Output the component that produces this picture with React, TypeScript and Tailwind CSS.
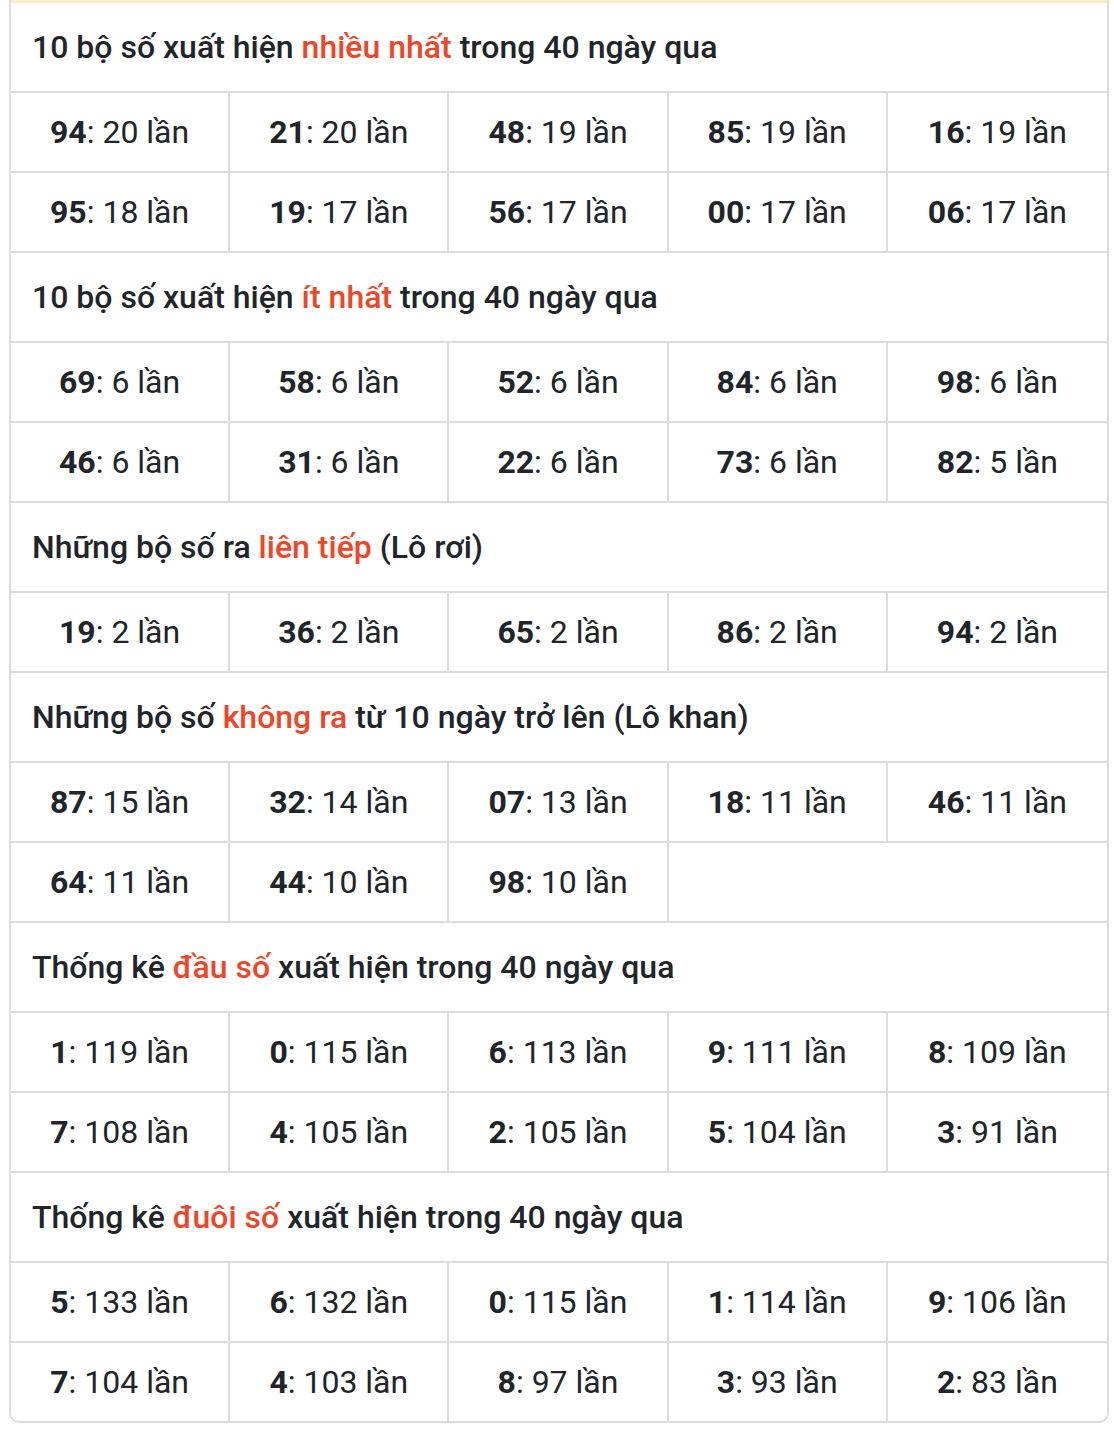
const sections: { title: [string, string, string]; rows: [string, string][][] }[] = [
  {
    title: ["10 bộ số xuất hiện ", "nhiều nhất", " trong 40 ngày qua"],
    rows: [
      [["94", "20"], ["21", "20"], ["48", "19"], ["85", "19"], ["16", "19"]],
      [["95", "18"], ["19", "17"], ["56", "17"], ["00", "17"], ["06", "17"]],
    ],
  },
  {
    title: ["10 bộ số xuất hiện ", "ít nhất", " trong 40 ngày qua"],
    rows: [
      [["69", "6"], ["58", "6"], ["52", "6"], ["84", "6"], ["98", "6"]],
      [["46", "6"], ["31", "6"], ["22", "6"], ["73", "6"], ["82", "5"]],
    ],
  },
  {
    title: ["Những bộ số ra ", "liên tiếp", " (Lô rơi)"],
    rows: [[["19", "2"], ["36", "2"], ["65", "2"], ["86", "2"], ["94", "2"]]],
  },
  {
    title: ["Những bộ số ", "không ra", " từ 10 ngày trở lên (Lô khan)"],
    rows: [
      [["87", "15"], ["32", "14"], ["07", "13"], ["18", "11"], ["46", "11"]],
      [["64", "11"], ["44", "10"], ["98", "10"]],
    ],
  },
  {
    title: ["Thống kê ", "đầu số", " xuất hiện trong 40 ngày qua"],
    rows: [
      [["1", "119"], ["0", "115"], ["6", "113"], ["9", "111"], ["8", "109"]],
      [["7", "108"], ["4", "105"], ["2", "105"], ["5", "104"], ["3", "91"]],
    ],
  },
  {
    title: ["Thống kê ", "đuôi số", " xuất hiện trong 40 ngày qua"],
    rows: [
      [["5", "133"], ["6", "132"], ["0", "115"], ["1", "114"], ["9", "106"]],
      [["7", "104"], ["4", "103"], ["8", "97"], ["3", "93"], ["2", "83"]],
    ],
  },
];

export default function App() {
  return (
    <div className="min-h-screen bg-white pl-[9px] pr-[5px] pb-[6px] font-['Roboto',sans-serif] text-[#212529]">
      <div className="border-x-2 border-b-2 border-[#dcdcdc] rounded-b-[10px] overflow-hidden">
        <div className="h-[3px] bg-[#fdefc3]" />
        {sections.map((s, si) => (
          <div key={si}>
            <div className="h-[90px] flex items-center px-[21px] border-b-2 border-[#dcdcdc] text-[32px] font-medium">
              <span>
                {s.title[0]}
                <span className="text-[#ee4627]">{s.title[1]}</span>
                {s.title[2]}
              </span>
            </div>
            {s.rows.map((row, ri) => {
              const last = si === sections.length - 1 && ri === s.rows.length - 1;
              return (
                <div
                  key={ri}
                  className={
                    last
                      ? "grid grid-cols-5 h-[78px]"
                      : "grid grid-cols-5 h-[80px] border-b-2 border-[#dcdcdc]"
                  }
                >
                  {row.map(([n, c], ci) => (
                    <div
                      key={ci}
                      className={
                        ci < 4
                          ? "flex items-center justify-center border-r-2 border-[#dcdcdc] text-[32px]"
                          : "flex items-center justify-center text-[32px]"
                      }
                    >
                      <span>
                        <span className="font-bold">{n}</span>: {c} lần
                      </span>
                    </div>
                  ))}
                </div>
              );
            })}
          </div>
        ))}
      </div>
    </div>
  );
}
